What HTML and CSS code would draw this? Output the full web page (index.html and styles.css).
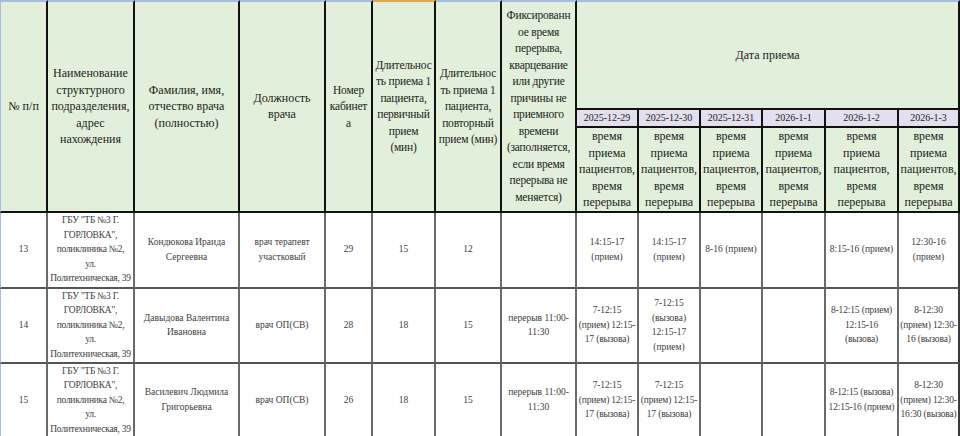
FILE: index.html
```html
<!DOCTYPE html>
<html lang="ru">
<head>
<meta charset="utf-8">
<title>График приема</title>
<link rel="stylesheet" href="styles.css">
</head>
<body>
<table class="sheet">
  <colgroup>
    <col class="c1"><col class="c2"><col class="c3"><col class="c4"><col class="c5"><col class="c6"><col class="c7"><col class="c8"><col class="c9"><col class="c10"><col class="c11"><col class="c12"><col class="c13"><col class="c14">
  </colgroup>
  <thead>
    <tr class="h1">
      <th rowspan="3" class="hd first">№ п/п</th>
      <th rowspan="3" class="hd">Наименование<br>структурного<br>подразделения,<br>адрес<br>нахождения</th>
      <th rowspan="3" class="hd">Фамилия, имя,<br>отчество врача<br>(полностью)</th>
      <th rowspan="3" class="hd">Должность<br>врача</th>
      <th rowspan="3" class="hd tight">Номер<br>кабинет<br>а</th>
      <th rowspan="3" class="hd sel tight">Длительнос<br>ть приема 1<br>пациента,<br>первичный<br>прием<br>(мин)</th>
      <th rowspan="3" class="hd tight">Длительнос<br>ть приема 1<br>пациента,<br>повторный<br>прием (мин)</th>
      <th rowspan="3" class="hd tight">Фиксированн<br>ое время<br>перерыва,<br>кварцевание<br>или другие<br>причины не<br>приемного<br>времени<br>(заполняется,<br>если время<br>перерыва не<br>меняется)</th>
      <th colspan="6" class="hd date-title">Дата приема</th>
    </tr>
    <tr class="h2">
      <th class="dt">2025-12-29</th>
      <th class="dt">2025-12-30</th>
      <th class="dt">2025-12-31</th>
      <th class="dt">2026-1-1</th>
      <th class="dt">2026-1-2</th>
      <th class="dt">2026-1-3</th>
    </tr>
    <tr class="h3">
      <th class="hd sub">время<br>приема<br>пациентов,<br>время<br>перерыва</th>
      <th class="hd sub">время<br>приема<br>пациентов,<br>время<br>перерыва</th>
      <th class="hd sub">время<br>приема<br>пациентов,<br>время<br>перерыва</th>
      <th class="hd sub">время<br>приема<br>пациентов,<br>время<br>перерыва</th>
      <th class="hd sub">время<br>приема<br>пациентов,<br>время<br>перерыва</th>
      <th class="hd sub">время<br>приема<br>пациентов,<br>время<br>перерыва</th>
    </tr>
  </thead>
  <tbody>
    <tr class="r1">
      <td class="first">13</td>
      <td class="addr">ГБУ "ТБ №3 Г.<br>ГОРЛОВКА",<br>поликлиника №2,<br>ул.<br>Политехническая, 39</td>
      <td>Кондюкова Ираида<br>Сергеевна</td>
      <td>врач терапевт<br>участковый</td>
      <td>29</td>
      <td>15</td>
      <td>12</td>
      <td></td>
      <td>14:15-17<br>(прием)</td>
      <td>14:15-17<br>(прием)</td>
      <td>8-16 (прием)</td>
      <td></td>
      <td>8:15-16 (прием)</td>
      <td>12:30-16<br>(прием)</td>
    </tr>
    <tr class="r2">
      <td class="first">14</td>
      <td class="addr">ГБУ "ТБ №3 Г.<br>ГОРЛОВКА",<br>поликлиника №2,<br>ул.<br>Политехническая, 39</td>
      <td>Давыдова Валентина<br>Ивановна</td>
      <td>врач ОП(СВ)</td>
      <td>28</td>
      <td>18</td>
      <td>15</td>
      <td>перерыв 11:00-<br>11:30</td>
      <td class="tight-d">7-12:15<br>(прием) 12:15-<br>17 (вызова)</td>
      <td>7-12:15<br>(вызова)<br>12:15-17<br>(прием)</td>
      <td></td>
      <td></td>
      <td class="tight-d">8-12:15 (прием)<br>12:15-16<br>(вызова)</td>
      <td class="tight-d">8-12:30<br>(прием) 12:30-<br>16 (вызова)</td>
    </tr>
    <tr class="r3">
      <td class="first">15</td>
      <td class="addr">ГБУ "ТБ №3 Г.<br>ГОРЛОВКА",<br>поликлиника №2,<br>ул.<br>Политехническая, 39</td>
      <td>Василевич Людмила<br>Григорьевна</td>
      <td>врач ОП(СВ)</td>
      <td>26</td>
      <td>18</td>
      <td>15</td>
      <td>перерыв 11:00-<br>11:30</td>
      <td class="tight-d">7-12:15<br>(прием) 12:15-<br>17 (вызова)</td>
      <td class="tight-d">7-12:15<br>(прием) 12:15-<br>17 (вызова)</td>
      <td></td>
      <td></td>
      <td class="tight-d">8-12:15 (вызова)<br>12:15-16 (прием)</td>
      <td class="tight-d">8-12:30<br>(прием) 12:30-<br>16:30 (вызова)</td>
    </tr>
  </tbody>
</table>
</body>
</html>
```
FILE: styles.css
```css
html, body {
  margin: 0;
  padding: 0;
  background: #ffffff;
}

.sheet {
  border-collapse: separate;
  border-spacing: 0;
  table-layout: fixed;
  width: 960px;
}

.c1 { width: 48px; }
.c2 { width: 87px; }
.c3 { width: 105px; }
.c4 { width: 86px; }
.c5 { width: 47px; }
.c6 { width: 63px; }
.c7 { width: 66px; }
.c8 { width: 75px; }
.c9 { width: 62px; }
.c10 { width: 62px; }
.c11 { width: 62px; }
.c12 { width: 63px; }
.c13 { width: 73px; }
.c14 { width: 61px; }

.sheet th,
.sheet td {
  box-sizing: border-box;
  padding: 0;
  text-align: center;
  vertical-align: middle;
  white-space: nowrap;
  overflow: visible;
  font-family: "Liberation Serif", "Times New Roman", serif;
}

.sheet th {
  font-weight: normal;
  color: #1c1c1c;
  border-right: 2px solid #111111;
  border-bottom: 2px solid #111111;
}

.hd {
  background: #e2efda;
  font-size: 12px;
  line-height: 16.5px;
}

.sheet .tight {
  font-size: 11.5px;
  letter-spacing: -0.2px;
}

.h1 th {
  border-top: 2px solid #a6bce2;
}

.h1 th.sel {
  border-top-color: #e6a651;
}

.h1 { height: 110px; }
.h2 { height: 18px; }
.h3 { height: 82px; }

.date-title {
  font-size: 12px;
}

.dt {
  background: #e4dfee;
  font-size: 10px;
  line-height: 14px;
}

.sheet .first {
  border-left: 1px solid #a6bce2;
}

.sheet td {
  background: #ffffff;
  color: #3d3d3d;
  font-size: 9.5px;
  line-height: 14.5px;
  border-right: 2px solid #6a6a6a;
  border-bottom: 2px solid #555555;
}

.sheet .addr {
  letter-spacing: -0.25px;
}

.sheet .tight-d {
  letter-spacing: -0.15px;
}

.sheet td:last-child {
  border-right-color: #3a3a3a;
}

.r1 { height: 76px; }
.r2 { height: 75px; }
.r3 { height: 74px; }
```
